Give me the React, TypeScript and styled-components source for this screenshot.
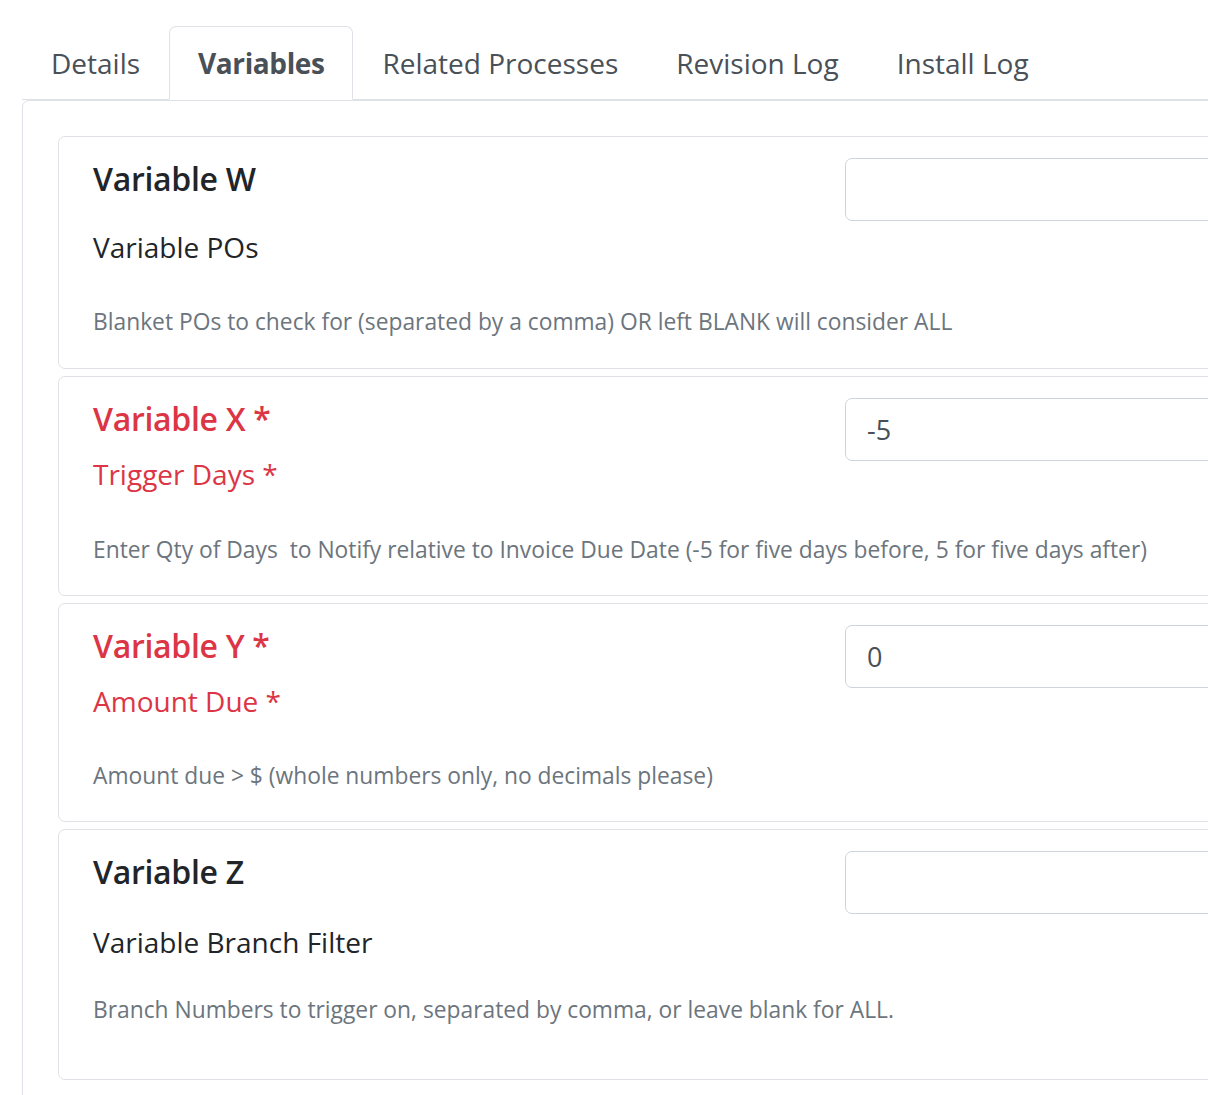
import React from "react";
import styled, { createGlobalStyle } from "styled-components";

const Global = createGlobalStyle`
  html, body { margin: 0; padding: 0; background: #fff; overflow: hidden; }
  body { font-family: "Open Sans", "Noto Sans", sans-serif; color: #212529; }
  * { box-sizing: border-box; }
`;

const Page = styled.div`
  width: 1500px;
  padding: 26px 0 0 22px;
`;

const Nav = styled.div`
  display: flex;
  border-bottom: 1px solid #dee2e6;
`;

const Tab = styled.div<{ $active?: boolean }>`
  padding: 15px 28px;
  font-size: 28px;
  line-height: 42px;
  color: #495057;
  font-weight: ${(p) => (p.$active ? 700 : 400)};
  letter-spacing: ${(p) => (p.$active ? "-0.4px" : "0")};
  border: 1px solid transparent;
  border-color: ${(p) => (p.$active ? "#dee2e6 #dee2e6 #fff" : "transparent")};
  border-radius: 7px 7px 0 0;
  margin-bottom: -1px;
  background: ${(p) => (p.$active ? "#fff" : "transparent")};
  white-space: nowrap;
`;

const TabContent = styled.div`
  border: 1px solid #dee2e6;
  border-radius: 7px;
  padding: 35px 35px 20px 35px;
`;

const Card = styled.div<{ $pb: number }>`
  border: 1px solid #dee2e6;
  border-radius: 7px;
  margin-bottom: 7px;
  padding: 21px 34px ${(p) => p.$pb}px 34px;
  display: grid;
  grid-template-columns: 752px 1fr;
`;

const Left = styled.div`
  display: flex;
  flex-direction: column;
`;

const Title = styled.h5<{ $req?: boolean }>`
  margin: 0;
  font-size: 32px;
  line-height: 42px;
  font-weight: 600;
  letter-spacing: -0.3px;
  color: ${(p) => (p.$req ? "#dc3545" : "#212529")};
`;

const Label = styled.div<{ $req?: boolean; $mt: number }>`
  margin-top: ${(p) => p.$mt}px;
  font-size: 28px;
  line-height: 43px;
  color: ${(p) => (p.$req ? "#dc3545" : "#212529")};
`;

const Help = styled.div<{ $mt: number }>`
  margin-top: ${(p) => p.$mt}px;
  font-size: 22.8px;
  line-height: 37px;
  color: #6c757d;
  white-space: nowrap;
`;

const Input = styled.input`
  display: block;
  width: 100%;
  height: 63px;
  border: 1px solid #ced4da;
  border-radius: 7px;
  padding: 0 21px;
  font-family: inherit;
  font-size: 27px;
  color: #495057;
  background: #fff;
  outline: none;
`;

type Item = {
  title: string;
  label: string;
  help: string;
  value: string;
  req?: boolean;
  labelMt: number;
  helpMt: number;
  pb: number;
};

const items: Item[] = [
  {
    title: "Variable W",
    label: "Variable POs",
    help: "Blanket POs to check for (separated by a comma) OR left BLANK will consider ALL",
    value: "",
    labelMt: 26,
    helpMt: 34,
    pb: 28,
  },
  {
    title: "Variable X *",
    label: "Trigger Days *",
    help: "Enter Qty of Days\u00a0 to Notify relative to Invoice Due Date (-5 for five days before, 5 for five days after)",
    value: "-5",
    req: true,
    labelMt: 13,
    helpMt: 35,
    pb: 27,
  },
  {
    title: "Variable Y *",
    label: "Amount Due *",
    help: "Amount due > $ (whole numbers only, no decimals please)",
    value: "0",
    req: true,
    labelMt: 13,
    helpMt: 34,
    pb: 27,
  },
  {
    title: "Variable Z",
    label: "Variable Branch Filter",
    help: "Branch Numbers to trigger on, separated by comma, or leave blank for ALL.",
    value: "",
    labelMt: 28,
    helpMt: 27,
    pb: 51,
  },
];

export default function App() {
  const tabs = ["Details", "Variables", "Related Processes", "Revision Log", "Install Log"];
  return (
    <>
      <Global />
      <Page>
        <Nav>
          {tabs.map((t) => (
            <Tab key={t} $active={t === "Variables"}>
              {t}
            </Tab>
          ))}
        </Nav>
        <TabContent>
          {items.map((it) => (
            <Card key={it.title} $pb={it.pb}>
              <Left>
                <Title $req={it.req}>{it.title}</Title>
                <Label $req={it.req} $mt={it.labelMt}>
                  {it.label}
                </Label>
                <Help $mt={it.helpMt}>{it.help}</Help>
              </Left>
              <div>
                <Input defaultValue={it.value} />
              </div>
            </Card>
          ))}
        </TabContent>
      </Page>
    </>
  );
}
